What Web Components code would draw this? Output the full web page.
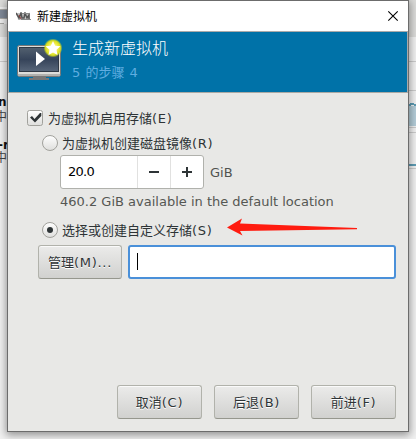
<!DOCTYPE html>
<html lang="zh-CN"><head><meta charset="utf-8"><title>新建虚拟机</title>
<style>
html,body{margin:0;width:416px;height:439px;overflow:hidden}
body{font-family:"DejaVu Sans","Noto Sans CJK SC",sans-serif;font-size:13px;color:#2e3436}
</style></head><body>
<vm-desktop>
 <vm-window caption="新建虚拟机">
  <vm-banner slot="banner"><span slot="title">生成新虚拟机</span><span slot="step">5 的步骤 4</span></vm-banner>
  <vm-option kind="check" style="margin-left:19px">为虚拟机启用存储<vm-key>(E)</vm-key></vm-option>
  <vm-option kind="radio" style="margin:3px 0 0 34px">为虚拟机创建磁盘镜像<vm-key>(R)</vm-key></vm-option>
  <vm-spin value="20.0" unit="GiB"></vm-spin>
  <vm-note>460.2 GiB available in the default location</vm-note>
  <vm-option kind="radio" on style="margin:8px 0 0 34px">选择或创建自定义存储<vm-key>(S)</vm-key></vm-option>
  <vm-path><vm-button style="--w:84px">管理<vm-key>(M)...</vm-key></vm-button></vm-path>
  <vm-button slot="actions">取消<vm-key>(C)</vm-key></vm-button>
  <vm-button slot="actions">后退<vm-key>(B)</vm-key></vm-button>
  <vm-button slot="actions">前进<vm-key>(F)</vm-key></vm-button>
 </vm-window>
</vm-desktop>
<script>
const define=(name,render)=>customElements.define(name,class extends HTMLElement{
  constructor(){super();this.attachShadow({mode:'open'})}
  connectedCallback(){const t=document.createElement('template');t.innerHTML=render(this);this.shadowRoot.replaceChildren(t.content.cloneNode(true))}
});

define('vm-desktop',()=>`<style>
:host{display:block;position:relative;width:416px;height:439px;background:#f1f1f1;overflow:hidden}
.back{position:absolute;inset:0;display:block}
slot{display:block;position:relative;padding-left:7px}
</style>
<svg class="back" width="416" height="439" shape-rendering="crispEdges">
<path fill="#dcdcda" d="M0 0H7V7H0zM0 24H7V37H0zM409 0h7v37h-7z"/><path fill="#eee" d="M0 7H7V24H0z"/>
<path fill="#7f8998" d="M0 10h7v8H0z"/><path fill="#a9a9a6" d="M0 9h7v1H0zM0 18h7v1H0zM0 23h4v1H0z"/>
<path fill="#ccc" d="M0 61h7v1H0zM409 61h7v1h-7zM409 90h7v1h-7zM409 127h7v1h-7zM409 132h7v1h-7zM409 168h7v1h-7z"/>
<path fill="#b4cdd8" d="M409 106h7v20h-7z"/><path fill="none" stroke="#5e9cb4" stroke-width="2" d="M409 105l3-1 4 1M409 165h7"/>
<g font-size="12" fill="#444"><text x="-2" y="106" font-weight="bold" fill="#111">n</text><text x="-5" y="121">中</text><text x="-2" y="149" font-weight="bold" fill="#111">-r</text><text x="-5" y="162">中</text></g>
</svg><slot></slot>`);

define('vm-window',e=>`<style>
:host{display:flex;flex-direction:column;box-sizing:border-box;width:402px;height:432px;border:1px solid #6c6c6c;background:#e8e8e6;box-shadow:0 2px 8px 1px #0006}
header{display:flex;align-items:center;height:30px;padding:0 9px 0 8px;background:#fff;border-bottom:1px solid #aaa;color:#000;font:12px "Noto Sans CJK SC",sans-serif}
header span{flex:1;padding-left:6px;line-height:28px}
main{flex:1;padding-top:14px}
footer{display:flex;gap:12px;padding:0 11px 12px 109px}
</style>
<header><svg width="15" height="8" viewBox="0 0 15 8"><path fill="#c4c4c4" d="M1 1h13v7H2z"/><path d="M0 1l3 5 2-5 1 5h2l1-5 2 5 2-3v4" fill="none" stroke="#555" stroke-width="1.5"/><path d="M6 1h8v1H6zM5 7h10v1H5z" fill="#888"/><path d="M3 3l2 4" stroke="#8e3b3b"/></svg>
<span>${e.getAttribute('caption')}</span>
<svg width="12" height="12" viewBox="0 0 12 12"><path d="M1.300 1.300l9.400 9.400M10.700 1.300l-9.400 9.400" stroke="#000" stroke-width="1.100"/></svg></header>
<slot name="banner"></slot><main><slot></slot></main><footer><slot name="actions"></slot></footer>`);

define('vm-banner',()=>`<style>
:host{display:flex;box-sizing:border-box;height:61px;margin:0 1px 0 1px;background:#0072a8;border-bottom:1px solid #aaa9a4;padding:5px 8px;gap:10px;box-shadow:-1px 0 #aaa,1px 0 #aaa}
.t{display:block;font:300 16px/21px "Noto Sans CJK SC",sans-serif;color:#fff}
.s{display:block;font:13px/18px "DejaVu Sans","Noto Sans CJK SC",sans-serif;color:#5fade0;margin-top:6px;word-spacing:1px}
svg{flex:none;margin-top:1px}
</style>
<svg width="45" height="43" viewBox="0 0 45 43"><defs><linearGradient id="a" x2="0" y2="1"><stop stop-color="#52606f"/><stop offset=".5" stop-color="#36445a"/><stop offset="1" stop-color="#586679"/></linearGradient><radialGradient id="g"><stop stop-color="#fff"/><stop offset=".5" stop-color="#f1ee4c"/><stop offset=".78" stop-color="#d6dc20"/><stop offset="1" stop-color="#bfd31f" stop-opacity="0"/></radialGradient></defs>
<path d="M16 35h13v5H16z" fill="#989894"/>
<rect x=".5" y="7.500" width="43" height="31" rx="2" fill="#ddddda" stroke="#777"/><rect x="2.500" y="9.500" width="39" height="24" fill="url(#a)" stroke="#303945"/><path d="M1 36h42v2H1z" fill="#b1b1ae"/><path d="M16 39h13v1h3v2H12v-2h4z" fill="#777"/>
<path d="M19 13.500l9 7.500-9 7z" fill="#fff"/><circle cx="36" cy="10" r="9.500" fill="url(#g)"/><path d="M36 3l2.200 4.700 5.300.6-4 3.500 1 5.200-4.500-2.500-4.500 2.500 1-5.200-4-3.500 5.300-.6z" fill="#fff"/></svg>
<div><span class="t"><slot name="title"></slot></span><span class="s"><slot name="step"></slot></span></div>`);

define('vm-key',()=>`<style>:host{display:inline;letter-spacing:.7px}</style><slot></slot>`);

define('vm-option',e=>{const on=e.hasAttribute('on');return `<style>
:host{display:flex;align-items:center;height:22px;gap:5px;line-height:20px;white-space:nowrap}svg{flex:none}
:host([kind=radio]){gap:4px}
span{position:relative;top:1px}
</style><svg width="16" height="16" viewBox="0 0 16 16"><defs><linearGradient id="b" x2="0" y2="1"><stop stop-color="#fff"/><stop offset="1" stop-color="#dededc"/></linearGradient></defs>
${e.getAttribute('kind')=='check'?'<rect x=".5" y=".5" width="15" height="15" rx="2" fill="url(#b)" stroke="#a1a19c"/><path d="M3 7.500L5 6l2.500 3L13 3h1.300v3L8 12.500z" fill="#2e3436"/>':`<circle cx="8" cy="8" r="7.500" fill="url(#b)" stroke="#a1a19c"/>${on?'<circle cx="8" cy="8" r="3" fill="#2e3436"/>':''}`}
</svg><span><slot></slot></span>`});

define('vm-spin',e=>`<style>
:host{display:flex;align-items:center;gap:6px;margin:1px 0 0 52px;color:#50534f}
.box{display:grid;grid-template-columns:76px 33px 33px;box-sizing:border-box;width:144px;height:34px;border:1px solid #b0b1ac;border-radius:3px;background:#fff}
.v{padding-left:7px;line-height:32px;color:#000;letter-spacing:-.75px}
svg{border-left:1px solid #e1e1e0;box-sizing:border-box}
</style><div class="box"><span class="v">${e.getAttribute('value')}</span>
<svg width="33" height="32"><path d="M11 15h10v2H11z" fill="#2e3436"/></svg><svg width="33" height="32"><path d="M11 15h10v2H11zM15 11h2v10h-2z" fill="#2e3436"/></svg></div><span>${e.getAttribute('unit')}</span>`);

define('vm-note',()=>`<style>:host{display:block;margin:3px 0 0 52px;line-height:19px;color:#555753;white-space:nowrap}</style><slot></slot>`);

define('vm-path',()=>`<style>
:host{display:flex;gap:6px;padding:4px 12px 0 30px;position:relative}
.in{flex:1;height:34px;box-sizing:border-box;border:2px solid #4a90d9;border-radius:3px;background:#fff;padding:6px 0 0 7px}
i{display:block;width:1px;height:17px;background:#000}
.arrow{position:absolute;left:219px;top:-23px}
</style><slot></slot><div class="in"><i></i></div>
<svg class="arrow" width="132" height="19"><path d="M0 9.500L15 .5l-2 5L130 10v1.200L13 13l2.500 4.500z" fill="#ff1c10"/></svg>`);

define('vm-button',()=>`<style>
:host{display:flex;align-items:center;justify-content:center;box-sizing:border-box;width:var(--w,85px);height:34px;border:1px solid #b1b2ab;border-bottom-color:#96978e;border-radius:3px;background:linear-gradient(#ebebea,#d1d1cf);box-shadow:inset 0 1px #fafafa;text-shadow:0 1px #fff;white-space:nowrap;padding-bottom:2px}
</style><span><slot></slot></span>`);
</script></body></html>
